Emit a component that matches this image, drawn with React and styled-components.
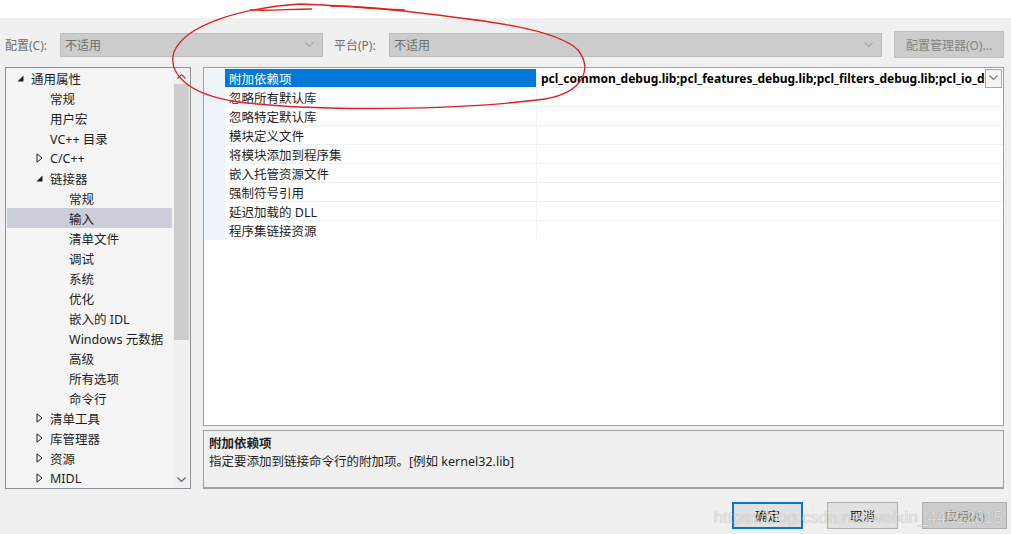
import React from "react"
import styled, { createGlobalStyle } from "styled-components"

const GlobalStyle = createGlobalStyle`
   html, body {
      margin: 0;
      padding: 0;
      background: #ffffff;
   }
   body {
      font-family: "Segoe UI", "Noto Sans", "Noto Sans CJK SC", sans-serif;
      font-size: 12px;
      color: #1e1e1e;
   }
`

const treeItems = [
   { label: "通用属性", level: 0, arrow: "open" },
   { label: "常规", level: 1 },
   { label: "用户宏", level: 1 },
   { label: "VC++ 目录", level: 1 },
   { label: "C/C++", level: 1, arrow: "closed" },
   { label: "链接器", level: 1, arrow: "open" },
   { label: "常规", level: 2 },
   { label: "输入", level: 2, selected: true },
   { label: "清单文件", level: 2 },
   { label: "调试", level: 2 },
   { label: "系统", level: 2 },
   { label: "优化", level: 2 },
   { label: "嵌入的 IDL", level: 2 },
   { label: "Windows 元数据", level: 2 },
   { label: "高级", level: 2 },
   { label: "所有选项", level: 2 },
   { label: "命令行", level: 2 },
   { label: "清单工具", level: 1, arrow: "closed" },
   { label: "库管理器", level: 1, arrow: "closed" },
   { label: "资源", level: 1, arrow: "closed" },
   { label: "MIDL", level: 1, arrow: "closed" },
]

const props = [
   "附加依赖项",
   "忽略所有默认库",
   "忽略特定默认库",
   "模块定义文件",
   "将模块添加到程序集",
   "嵌入托管资源文件",
   "强制符号引用",
   "延迟加载的 DLL",
   "程序集链接资源",
]

const Chevron = ({ color = "#8a8a8a", up }) => (
   <svg width="9" height="6" viewBox="0 0 9 6">
      <path
         d={up ? "M0.5 5.5 L4.5 1.5 L8.5 5.5" : "M0.5 0.5 L4.5 4.5 L8.5 0.5"}
         fill="none"
         stroke={color}
         strokeWidth="1.2"
      />
   </svg>
)

const Arrow = ({ type }) =>
   type === "open" ? (
      <svg width="7" height="7" viewBox="0 0 7 7">
         <path d="M6.5 0.5 L6.5 6.5 L0.5 6.5 Z" fill="#1e1e1e" />
      </svg>
   ) : (
      <svg width="7" height="10" viewBox="0 0 7 10">
         <path d="M1 0.8 L6 5 L1 9.2 Z" fill="none" stroke="#1e1e1e" strokeWidth="1" />
      </svg>
   )

const App = () => {
   return (
      <>
         <GlobalStyle />
         <TopStrip />
         <Dialog>
            <ConfigRow>
               <FieldLabel>配置(C):</FieldLabel>
               <Combo width={263}>
                  <span>不适用</span>
                  <Chevron color="#a8a8a8" />
               </Combo>
               <FieldLabel style={{ marginLeft: 11 }}>平台(P):</FieldLabel>
               <Combo width={493}>
                  <span>不适用</span>
                  <Chevron color="#a8a8a8" />
               </Combo>
               <ManagerButton>配置管理器(O)...</ManagerButton>
            </ConfigRow>

            <Main>
               <Tree>
                  <TreeList>
                     {treeItems.map((item, i) => (
                        <TreeRow key={i} level={item.level} selected={item.selected}>
                           <ArrowSlot>{item.arrow && <Arrow type={item.arrow} />}</ArrowSlot>
                           {item.label}
                        </TreeRow>
                     ))}
                  </TreeList>
                  <ScrollBar>
                     <ScrollBtn>
                        <Chevron color="#606060" up />
                     </ScrollBtn>
                     <Thumb />
                     <Track />
                     <ScrollBtn>
                        <Chevron color="#606060" />
                     </ScrollBtn>
                  </ScrollBar>
               </Tree>

               <RightCol>
                  <Grid>
                     <Gutter />
                     <Rows>
                        {props.map((name, i) => (
                           <PropRow key={i}>
                              <NameCell selected={i === 0}>{name}</NameCell>
                              <ValueCell>
                                 {i === 0 && (
                                    <>
                                       <ValueText>
                                          pcl_common_debug.lib;pcl_features_debug.lib;pcl_filters_debug.lib;pcl_io_debug.lib
                                       </ValueText>
                                       <DropBtn>
                                          <Chevron color="#7a7a7a" />
                                       </DropBtn>
                                    </>
                                 )}
                              </ValueCell>
                           </PropRow>
                        ))}
                     </Rows>
                  </Grid>
                  <Description>
                     <DescTitle>附加依赖项</DescTitle>
                     <DescText>指定要添加到链接命令行的附加项。[例如 kernel32.lib]</DescText>
                  </Description>
               </RightCol>
            </Main>

            <Footer>
               <DialogButton primary>确定</DialogButton>
               <DialogButton>取消</DialogButton>
               <DialogButton disabled wide>应用(A)</DialogButton>
            </Footer>
            <Watermark>https://blog.csdn.net/weixin_44522815</Watermark>
         </Dialog>

         <Annotation width="1011" height="140" viewBox="0 0 1011 140">
            <path
               d="M300 4 C 240 8, 185 25, 174 52 C 168 72, 185 94, 238 102 C 320 112, 460 110, 545 99 C 585 92, 592 68, 578 50 C 555 28, 480 20, 420 13 C 380 8, 345 6, 300 4"
               fill="none"
               stroke="#e02020"
               strokeWidth="1.3"
            />
            <path
               d="M250 10 C 270 11, 290 9, 312 9"
               fill="none"
               stroke="#e02020"
               strokeWidth="1.3"
            />
            <path
               d="M330 6 C 360 6, 380 9, 405 10"
               fill="none"
               stroke="#e02020"
               strokeWidth="1.3"
            />
         </Annotation>
      </>
   )
}

export default App

const TopStrip = styled.div`
   height: 18px;
   background: #ffffff;
`

const Dialog = styled.div`
   position: relative;
   height: 516px;
   background: #f0f0f0;
   padding: 13px 0 0 5px;
   box-sizing: border-box;
   overflow: hidden;
`

const ConfigRow = styled.div`
   display: flex;
   align-items: center;
   height: 27px;
`

const FieldLabel = styled.span`
   color: #6d6d6d;
   width: 55px;
   font-size: 12px;
`

const Combo = styled.div`
   width: ${(p) => p.width}px;
   height: 24px;
   box-sizing: border-box;
   background: #cccccc;
   border: 1px solid #bcbcbc;
   display: flex;
   align-items: center;
   justify-content: space-between;
   padding: 0 8px 0 4px;
   color: #6d6d6d;
   font-size: 12px;
`

const ManagerButton = styled.div`
   margin-left: 12px;
   width: 110px;
   height: 27px;
   box-sizing: border-box;
   background: #cccccc;
   border: 1px solid #bfbfbf;
   display: flex;
   align-items: center;
   justify-content: center;
   color: #838383;
   font-size: 12px;
`

const Main = styled.div`
   display: flex;
   gap: 12px;
   margin-top: 9px;
   height: 422px;
`

const Tree = styled.div`
   width: 186px;
   flex-shrink: 0;
   box-sizing: border-box;
   border: 1px solid #8b8f96;
   background: #f5f5f5;
   display: flex;
   overflow: hidden;
`

const TreeList = styled.div`
   flex: 1;
   overflow: hidden;
`

const TreeRow = styled.div`
   height: 20px;
   display: flex;
   align-items: center;
   padding-left: ${(p) => 8 + p.level * 19}px;
   margin-left: 1px;
   background: ${(p) => (p.selected ? "#cbcdd9" : "transparent")};
   white-space: nowrap;
   font-size: 12.5px;
   color: #1e1e1e;
`

const ArrowSlot = styled.span`
   width: 16px;
   display: flex;
   align-items: center;
   justify-content: flex-start;
   padding-left: 2px;
   box-sizing: border-box;
`

const ScrollBar = styled.div`
   width: 17px;
   display: flex;
   flex-direction: column;
   background: #f0f0f0;
   border-left: 1px solid #f7f7f7;
`

const ScrollBtn = styled.div`
   height: 16px;
   display: flex;
   align-items: center;
   justify-content: center;
`

const Thumb = styled.div`
   height: 256px;
   margin: 0 1px;
   background: #cdcdcd;
`

const Track = styled.div`
   flex: 1;
`

const RightCol = styled.div`
   width: 801px;
   min-width: 0;
   display: flex;
   flex-direction: column;
   gap: 4px;
`

const Grid = styled.div`
   height: 359px;
   box-sizing: border-box;
   border: 1px solid #a0a0a0;
   background: #ffffff;
   display: flex;
   align-items: flex-start;
   padding-top: 1px;
`

const Gutter = styled.div`
   width: 21px;
   flex-shrink: 0;
   height: 171px;
   background: #eef2f9;
`

const Rows = styled.div`
   flex: 1;
   min-width: 0;
   display: flex;
   flex-direction: column;
`

const PropRow = styled.div`
   display: flex;
   height: 18px;
   border-bottom: 1px solid #eef2f7;
   box-sizing: content-box;
   &:last-child {
      border-bottom: none;
   }
`

const NameCell = styled.div`
   width: 312px;
   flex-shrink: 0;
   box-sizing: border-box;
   padding-left: 4px;
   display: flex;
   align-items: center;
   background: ${(p) => (p.selected ? "#0078d7" : "#ffffff")};
   color: ${(p) => (p.selected ? "#ffffff" : "#1e1e1e")};
   border-right: 1px solid #eef2f7;
   font-size: 12.5px;
`

const ValueCell = styled.div`
   flex: 1;
   display: flex;
   align-items: center;
   min-width: 0;
   padding-left: 4px;
`

const ValueText = styled.div`
   flex: 1;
   min-width: 0;
   font-weight: bold;
   font-size: 12px;
   white-space: nowrap;
   overflow: hidden;
   color: #000000;
`

const DropBtn = styled.div`
   width: 17px;
   height: 19px;
   flex-shrink: 0;
   box-sizing: border-box;
   border: 1px solid #a8a8a8;
   background: #f4f4f4;
   display: flex;
   align-items: center;
   justify-content: center;
   margin-right: 1px;
`

const Description = styled.div`
   height: 59px;
   box-sizing: border-box;
   border: 1px solid #a0a0a0;
   border-bottom: 2px solid #a0a0a0;
   background: #f0f0f0;
   padding: 3px 5px;
`

const DescTitle = styled.div`
   font-weight: bold;
   font-size: 12.5px;
   line-height: 19px;
`

const DescText = styled.div`
   font-size: 12.5px;
   line-height: 18px;
`

const Footer = styled.div`
   display: flex;
   justify-content: flex-end;
   gap: 24px;
   margin-top: 13px;
   padding-right: 4px;
`

const DialogButton = styled.div`
   width: ${(p) => (p.wide ? 85 : 71)}px;
   height: 27px;
   box-sizing: border-box;
   display: flex;
   align-items: center;
   justify-content: center;
   font-size: 12.5px;
   background: ${(p) => (p.disabled ? "#cccccc" : "#e1e1e1")};
   border: ${(p) => (p.primary ? "2px solid #0078d7" : "1px solid #adadad")};
   color: ${(p) => (p.disabled ? "#838383" : "#1e1e1e")};
`

const Watermark = styled.div`
   position: absolute;
   right: 8px;
   bottom: 6px;
   font-family: "Liberation Sans", Arial, sans-serif;
   font-size: 17px;
   color: rgba(255, 255, 255, 0.7);
   text-shadow: 0 0 1px rgba(0, 0, 0, 0.35);
   pointer-events: none;
   white-space: nowrap;
`

const Annotation = styled.svg`
   position: absolute;
   top: 0;
   left: 0;
   pointer-events: none;
`
